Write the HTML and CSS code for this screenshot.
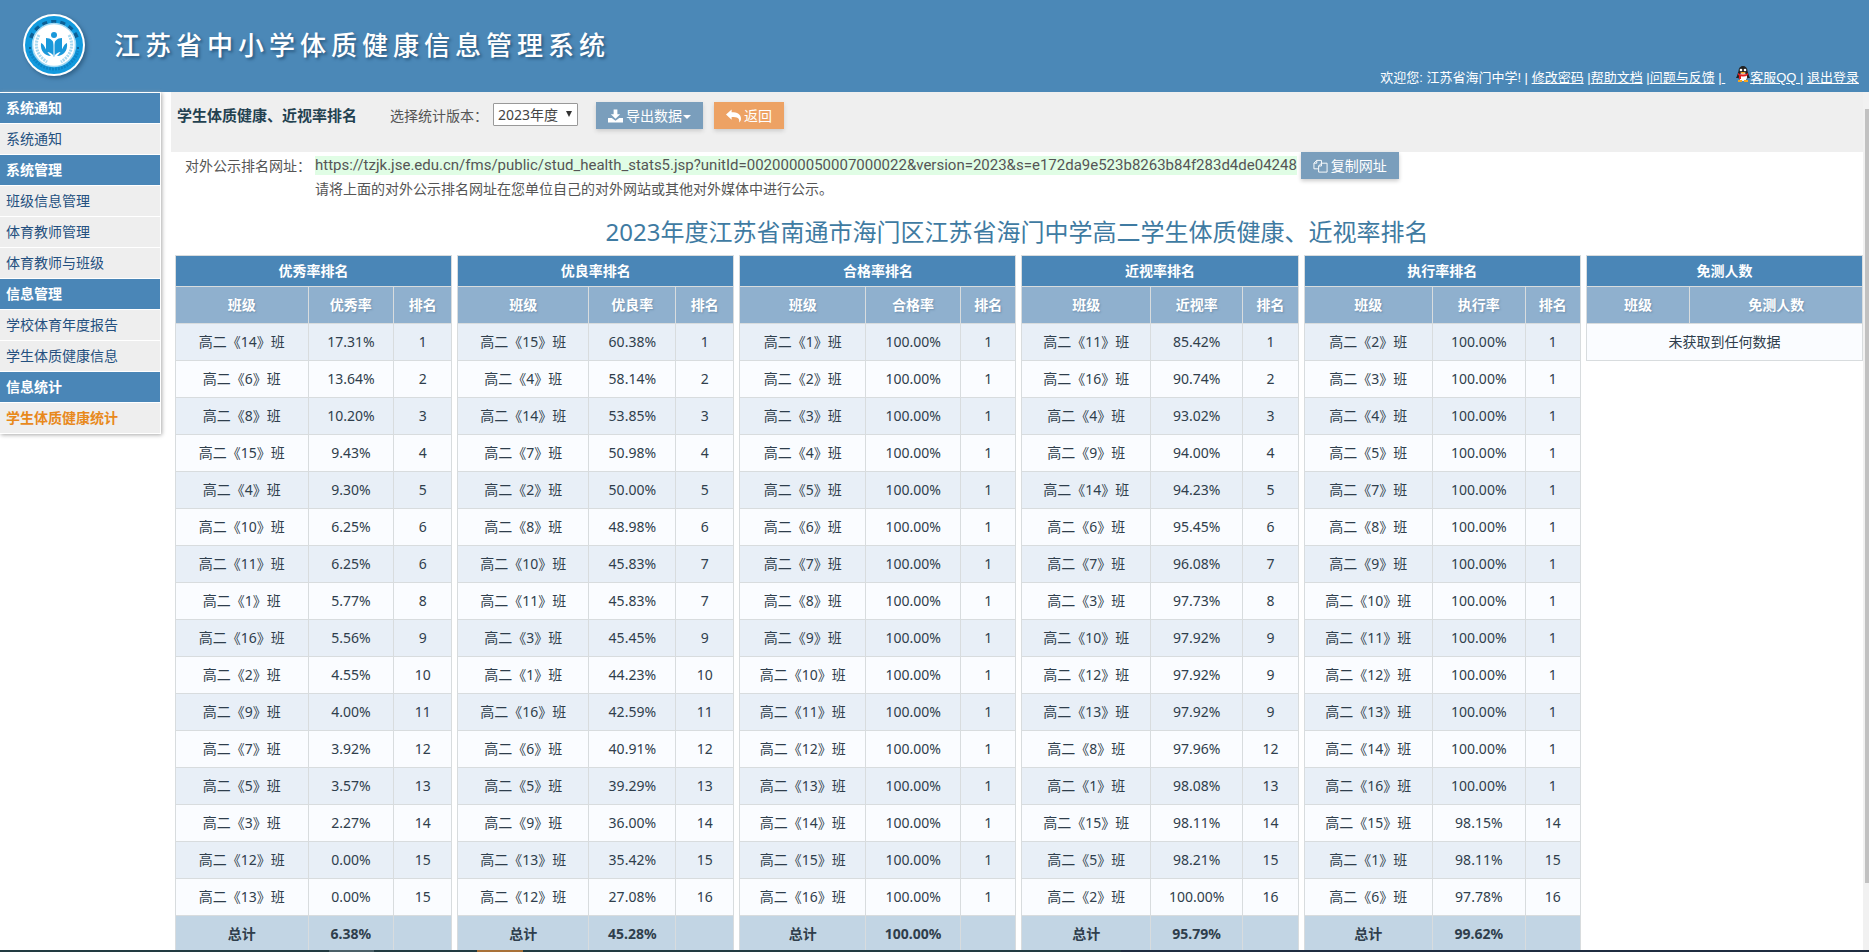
FILE: index.html
```html
<!DOCTYPE html>
<html lang="zh-CN">
<head>
<meta charset="utf-8">
<title>江苏省中小学体质健康信息管理系统</title>
<link rel="stylesheet" href="styles.css">
</head>
<body>
<header class="top">
  <svg class="logo" viewBox="0 0 64 64" aria-hidden="true">
    <circle cx="32" cy="32" r="31" fill="#fff"/>
    <circle cx="32" cy="32" r="29" fill="#129ade"/>
    <path d="M9 25a24.500 24.500 0 0 1 46 0" fill="none" stroke="#0b5f96" stroke-width="4" stroke-dasharray="5 4"/>
    <path d="M8 38a25 25 0 0 0 48 0" fill="none" stroke="#0d84c6" stroke-width="3" stroke-dasharray="2 1"/>
    <circle cx="8" cy="35" r="1" fill="#0b4f80"/><circle cx="56" cy="35" r="1" fill="#0b4f80"/>
    <circle cx="32" cy="32" r="21.500" fill="#fff" stroke="#9fd8f4" stroke-width="1.500"/>
    <path d="M17 22c-5 9-3 20 8 27M47 22c5 9 3 20-8 27" fill="none" stroke="#a5d8f0" stroke-width="3" stroke-dasharray="2 1"/>
    <circle cx="32" cy="22" r="3" fill="#1a98da"/>
    <path d="M24 25c5 0 8 3 8 8c0-5 3-8 8-8v14c-4 0-7 2-8 5c-1-3-4-5-8-5z" fill="#1a98da"/>
    <path d="M32 27v16" stroke="#fff" stroke-width="1"/>
    <path d="M19 30c4 1 4 8 10 13c-6 0-11-5-10-13zM45 30c-4 1-4 8-10 13c6 0 11-5 10-13z" fill="#1a98da"/>
  </svg>
  <h1 class="system-name">江苏省中小学体质健康信息管理系统</h1>
  <nav class="user-nav">
    <span>欢迎您: 江苏省海门中学! |</span>
    <a href="#">修改密码</a> |<a href="#">帮助文档</a> |<a href="#">问题与反馈</a> |<a href="#">&nbsp;</a>&nbsp;&nbsp;
    <svg class="penguin" viewBox="0 0 14 16" aria-hidden="true">
      <path d="M2 8L0 12l2 0zM12 8l2 4-2 0z" fill="#222"/>
      <ellipse cx="7" cy="9" rx="5.500" ry="6" fill="#222"/>
      <ellipse cx="7" cy="5" rx="4.500" ry="5" fill="#222"/>
      <ellipse cx="7" cy="11" rx="4" ry="4" fill="#fff"/>
      <circle cx="5" cy="4" r="1.300" fill="#fff"/><circle cx="9" cy="4" r="1.300" fill="#fff"/>
      <path d="M4 6h6l-3 2z" fill="#f5a623"/>
      <path d="M2 7q5 3 10 0v2q-5 3-10 0z" fill="#e02020"/>
      <path d="M3 9h2v4H3z" fill="#e02020"/>
      <path d="M2 14h4v2H2zM8 14h4v2H8z" fill="#f5a623"/>
    </svg><a href="#">客服QQ </a>| <a href="#">退出登录</a>
  </nav>
</header>
<div class="body">
  <aside class="side">
    <h2>系统通知</h2>
    <a href="#">系统通知</a>
    <h2>系统管理</h2>
    <a href="#">班级信息管理</a>
    <a href="#">体育教师管理</a>
    <a href="#">体育教师与班级</a>
    <h2>信息管理</h2>
    <a href="#">学校体育年度报告</a>
    <a href="#">学生体质健康信息</a>
    <h2>信息统计</h2>
    <a href="#" class="current">学生体质健康统计</a>
  </aside>
  <main class="content">
    <div class="toolbar">
      <strong class="page-name">学生体质健康、近视率排名</strong>
      <label for="version">选择统计版本：</label>
      <span class="select-box"><select id="version"><option>2023年度</option></select></span>
      <button class="btn export" type="button">
        <svg viewBox="0 0 16 14" aria-hidden="true"><path d="M6 0h4v5h3L8 10 3 5h3zM0 9h4l4 3 4-3h4v5H0z"/></svg><span>导出数据<i class="caret"></i></span></button>
      <button class="btn back" type="button">
        <svg viewBox="0 0 16 14" aria-hidden="true"><path d="M6 0v3c6 0 10 2 10 7 0 2-1 3-2 4 1-5-2-6-8-6v3L0 5.500z"/></svg>返回</button>
    </div>
    <div class="share">
      <span class="share-label">对外公示排名网址：</span>
      <div>
        <div class="share-line"><span class="url">https://tzjk.jse.edu.cn/fms/public/stud_health_stats5.jsp?unitId=0020000050007000022&amp;version=2023&amp;s=e172da9e523b8263b84f283d4de04248</span>
        <button class="btn copy" type="button"><svg viewBox="0 0 16 14" aria-hidden="true"><path class="line" d="M6 10H1V4l3-3h5v3M4 1v3H1M6 13.500V7l3-3h6v9.500zM9 4v3H6"/></svg>复制网址</button></div>
        <p class="hint">请将上面的对外公示排名网址在您单位自己的对外网站或其他对外媒体中进行公示。</p>
      </div>
    </div>
    <h2 class="report-title">2023年度江苏省南通市海门区江苏省海门中学高二学生体质健康、近视率排名</h2>
    <div class="tables" id="tables"></div>
  </main>
  <div class="scroll" aria-hidden="true"><div class="thumb"></div></div>
</div>
<div class="taskbar" aria-hidden="true"></div>
<script src="app.js"></script>
</body>
</html>
```

FILE: styles.css
```css
* { box-sizing: border-box; }
body {
  margin: 0;
  height: 100vh;
  overflow: hidden;
  display: flex;
  flex-direction: column;
  background: #fff;
  color: #2f3e4c;
  font: 14px/20px "Noto Sans", "Noto Sans CJK SC", sans-serif;
}
h1, h2, p { margin: 0; }

.top {
  flex: none;
  height: 92px;
  padding: 0 10px 2px 22px;
  display: flex;
  align-items: center;
  background: #4b88b7;
  color: #fff;
}
.logo { width: 64px; height: 64px; filter: drop-shadow(2px 2px 2px #2f5f86); }
.system-name {
  flex: 1;
  margin-left: 28px;
  font-size: 26px;
  line-height: 40px;
  font-weight: 500;
  letter-spacing: 5px;
  text-shadow: 2px 2px 3px #2b5a80;
}
.user-nav {
  align-self: flex-end;
  padding-bottom: 2px;
  font-family: "Liberation Sans", "Noto Sans CJK SC", sans-serif;
  font-size: 13px;
  white-space: nowrap;
}
.user-nav a { color: #fff; }
.penguin { width: 14px; height: 16px; }

.body { flex: 1; min-height: 0; display: flex; }
.side {
  flex: none;
  align-self: flex-start;
  width: 161px;
  padding: 0 1px 1px 0;
  background: #fff;
  box-shadow: 1px 1px 4px #aaa;
}
.side h2, .side a {
  display: block;
  height: 31px;
  padding-left: 6px;
  border-top: 1px solid #fff;
  font-size: 14px;
  line-height: 29px;
}
.side h2 { background: #4a86b7; color: #fff; font-weight: 700; }
.side a { background: #eee; color: #24507f; text-decoration: none; }
.side .current { color: #e8891c; font-weight: 700; }

.content { flex: 1; min-width: 0; margin-left: 10px; overflow: hidden; }
.toolbar {
  height: 60px;
  padding: 10px 6px;
  display: flex;
  align-items: flex-start;
  background: #efefef;
  line-height: 27px;
}
.page-name { width: 213px; font-size: 15px; color: #234150; }
.toolbar label { width: 103px; color: #555; }
.select-box { position: relative; margin-right: 18px; }
.select-box::after {
  content: "";
  position: absolute;
  right: 6px;
  top: 9px;
  border: 3px solid transparent;
  border-top: 6px solid #333;
  border-bottom: 0;
}
.select-box select {
  appearance: none;
  display: block;
  width: 85px;
  height: 23px;
  margin-top: 1px;
  padding: 0 4px;
  border: 1px solid #999;
  border-radius: 1px;
  background: #fff;
  color: #444;
  font: inherit;
  line-height: 20px;
}
.btn {
  height: 27px;
  padding: 0 12px;
  display: inline-flex;
  align-items: center;
  gap: 3px;
  border: 0;
  background: #7a9ebc;
  color: #fff;
  font: inherit;
  line-height: 20px;
  white-space: nowrap;
  box-shadow: 0 2px 4px #ccc;
}
.btn svg { width: 15px; height: 14px; fill: #fff; }
.btn .line { fill: none; stroke: #fff; stroke-width: 1; }
.export { margin-right: 11px; }
.back { background: #eda264; }
.caret {
  display: inline-block;
  margin-left: 1px;
  border: 4px solid transparent;
  border-top-color: #fff;
  border-bottom: 0;
  vertical-align: middle;
}

.share { display: flex; padding-left: 14px; color: #555; white-space: nowrap; }
.share-label { width: 130px; line-height: 28px; }
.share-line { display: flex; align-items: center; gap: 4px; }
.url { background: #e0fde5; font-family: Roboto, sans-serif; font-size: 15px; line-height: 19px; }
.hint { line-height: 20px; }
.report-title {
  margin: 19px 0 9px;
  text-align: center;
  font-size: 24px;
  line-height: 28px;
  font-weight: 400;
  color: #3f7ba2;
}

.tables {
  display: grid;
  grid-template-columns: repeat(6, minmax(0, 1fr));
  gap: 5px;
  align-items: start;
  padding-left: 4px;
}
.rank { width: 100%; table-layout: fixed; border-collapse: collapse; text-align: center; }
.rank th, .rank td { height: 37px; padding: 0; border: 1px solid #d8dcde; }
.rank th { color: #fff; font-weight: 700; background: #8fb0ce; text-shadow: 1px 1px 2px #6d8fae; }
.rank .caption th { height: 31px; background: #4a86b7; text-shadow: none; }
.rank td { background: #fafcff; }
.rank tbody tr:nth-child(odd) td { background: #e8eff7; }
.rank tbody tr.empty:nth-child(odd) td { background: #fafcff; }
.rank tfoot td { background: #c2d5e4; font-weight: 700; }

.scroll { flex: none; width: 6px; padding-top: 17px; background: #f1f1f1; }
.thumb { height: 92%; margin-left: 2px; background: #c1c1c1; }
.taskbar {
  flex: none;
  height: 2px;
  background: linear-gradient(90deg, #223b41 17.6%, #4b6068 17.6% 20%, #223b41 20% 25.5%, #a97138 25.5% 28%, #223b41 28% 60%, #1f2c40 60%);
}
```

FILE: app.js
```js
const tables = [
  { name: '优秀率', cols: [48, 31, 21], total: '6.38%', rows: '14 17.31 1,6 13.64 2,8 10.20 3,15 9.43 4,4 9.30 5,10 6.25 6,11 6.25 6,1 5.77 8,16 5.56 9,2 4.55 10,9 4.00 11,7 3.92 12,5 3.57 13,3 2.27 14,12 0.00 15,13 0.00 15' },
  { name: '优良率', cols: [47.5, 31.5, 21], total: '45.28%', rows: '15 60.38 1,4 58.14 2,14 53.85 3,7 50.98 4,2 50.00 5,8 48.98 6,10 45.83 7,11 45.83 7,3 45.45 9,1 44.23 10,16 42.59 11,6 40.91 12,5 39.29 13,9 36.00 14,13 35.42 15,12 27.08 16' },
  { name: '合格率', cols: [45.5, 34.5, 20], total: '100.00%', rows: Array.from({ length: 16 }, (_, i) => `${i + 1} 100.00 1`).join() },
  { name: '近视率', cols: [46.5, 33.5, 20], total: '95.79%', rows: '11 85.42 1,16 90.74 2,4 93.02 3,9 94.00 4,14 94.23 5,6 95.45 6,7 96.08 7,3 97.73 8,10 97.92 9,12 97.92 9,13 97.92 9,8 97.96 12,1 98.08 13,15 98.11 14,5 98.21 15,2 100.00 16' },
  { name: '执行率', cols: [46.5, 33.5, 20], total: '99.62%', rows: '2 100.00 1,3 100.00 1,4 100.00 1,5 100.00 1,7 100.00 1,8 100.00 1,9 100.00 1,10 100.00 1,11 100.00 1,12 100.00 1,13 100.00 1,14 100.00 1,16 100.00 1,15 98.15 14,1 98.11 15,6 97.78 16' }
];

const colgroup = cols => `<colgroup>${cols.map(w => `<col style="width:${w}%">`).join('')}</colgroup>`;

const rank = t => `<table class="rank">${colgroup(t.cols)}
<thead><tr class="caption"><th colspan="3">${t.name}排名</th></tr>
<tr><th>班级</th><th>${t.name}</th><th>排名</th></tr></thead>
<tbody>${t.rows.split(',').map(r => {
  const [cls, rate, place] = r.split(' ');
  return `<tr><td>高二《${cls}》班</td><td>${rate}%</td><td>${place}</td></tr>`;
}).join('')}</tbody>
<tfoot><tr><td>总计</td><td>${t.total}</td><td></td></tr></tfoot></table>`;

const exempt = `<table class="rank">${colgroup([37.5, 62.5])}
<thead><tr class="caption"><th colspan="2">免测人数</th></tr>
<tr><th>班级</th><th>免测人数</th></tr></thead>
<tbody><tr class="empty"><td colspan="2">未获取到任何数据</td></tr></tbody></table>`;

document.getElementById('tables').innerHTML = tables.map(rank).join('') + exempt;
```
